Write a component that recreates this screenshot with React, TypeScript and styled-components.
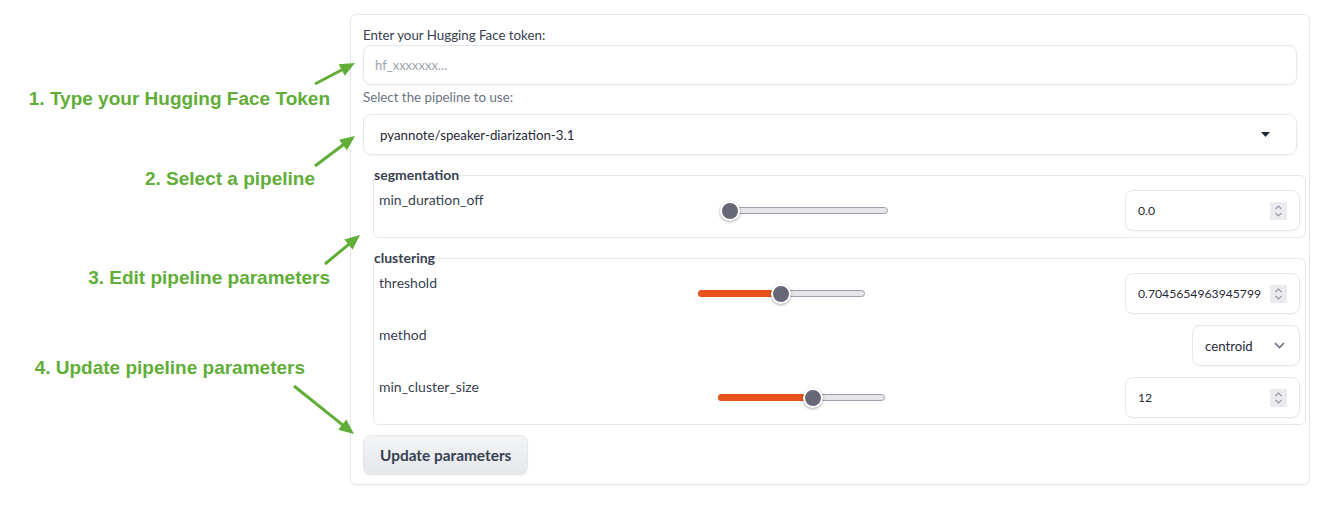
import React from "react";
import styled, { createGlobalStyle } from "styled-components";

const GlobalStyle = createGlobalStyle`
  html, body { margin: 0; padding: 0; background: #ffffff; }
  body { font-family: Lato, "Noto Sans", sans-serif; }
  * { box-sizing: border-box; }
`;

const Page = styled.div`
  position: relative;
  display: flex;
  align-items: flex-start;
  width: 1335px;
  height: 510px;
  overflow: hidden;
`;

const Notes = styled.div`
  width: 350px;
  flex: none;
  display: flex;
  flex-direction: column;
  align-items: flex-end;
  padding-top: 88px;
`;

const Note = styled.div<{ $top: number; $right: number }>`
  margin-top: ${(p) => p.$top}px;
  margin-right: ${(p) => p.$right}px;
  font-family: "Liberation Sans", Arial, sans-serif;
  font-weight: 700;
  font-size: 19px;
  line-height: 22px;
  color: #60ae37;
  white-space: nowrap;
`;

const ArrowLayer = styled.svg`
  position: absolute;
  left: 0;
  top: 0;
  width: 1335px;
  height: 510px;
  pointer-events: none;
  z-index: 2;
`;

const Card = styled.div`
  margin-top: 14px;
  width: 960px;
  flex: none;
  border: 1px solid #e5e7eb;
  border-radius: 6px;
  padding: 10px 12px 9px;
  display: flex;
  flex-direction: column;
  background: #ffffff;
  box-shadow: 0 1px 2px rgba(0, 0, 0, 0.04);
`;

const FieldLabel = styled.label<{ $muted?: boolean; $gap?: number }>`
  display: block;
  font-size: 13.3px;
  line-height: 20px;
  margin-top: ${(p) => p.$gap ?? 0}px;
  color: ${(p) => (p.$muted ? "#6b7280" : "#374151")};
`;

const TextBox = styled.input`
  height: 40px;
  width: 100%;
  border: 1px solid #e5e7eb;
  border-radius: 8px;
  padding: 0 11px;
  font-family: inherit;
  font-size: 13px;
  color: #1f2937;
  outline: none;
  box-shadow: 0 1px 2px rgba(0, 0, 0, 0.04);
  &::placeholder {
    color: #9ca3af;
  }
`;

const PipelineSelect = styled.div`
  margin-top: 7px;
  height: 41px;
  border: 1px solid #e5e7eb;
  border-radius: 8px;
  padding: 0 26px 0 16px;
  display: flex;
  align-items: center;
  justify-content: space-between;
  font-size: 13.3px;
  color: #1f2937;
  box-shadow: 0 1px 2px rgba(0, 0, 0, 0.04);
`;

const Group = styled.fieldset`
  margin: 11px -9px 0 10px;
  padding: 6px 5px 6px;
  border: 1px solid #e5e7eb;
  border-radius: 6px;
  min-width: 0;
  display: flex;
  flex-direction: column;
  gap: 11px;
`;

const Legend = styled.legend`
  padding: 0;
  margin-left: -5px;
  font-weight: 700;
  font-size: 14px;
  line-height: 18px;
  color: #374151;
`;

const Row = styled.div`
  display: flex;
  align-items: center;
  height: 41px;
`;

const ParamLabel = styled.span`
  align-self: flex-start;
  font-size: 14px;
  line-height: 20px;
  color: #374151;
`;

const SliderSlot = styled.div`
  flex: 1;
  display: flex;
  justify-content: center;
  align-items: center;
`;

const Track = styled.div`
  position: relative;
  width: 167px;
  height: 7px;
  border: 1px solid #9e9eaa;
  border-radius: 4px;
  background: #e6e6ea;
`;

const Fill = styled.div`
  position: absolute;
  left: -1px;
  top: -1px;
  bottom: -1px;
  border-radius: 4px;
  background: #e8531c;
`;

const Thumb = styled.div`
  position: absolute;
  top: 50%;
  width: 20px;
  height: 20px;
  margin-left: -10px;
  margin-top: -10px;
  border-radius: 50%;
  background: #676776;
  border: 2px solid #ffffff;
  box-shadow: 0 1px 3px rgba(0, 0, 0, 0.35);
`;

const NumberBox = styled.div`
  width: 175px;
  height: 41px;
  margin-left: auto;
  flex: none;
  border: 1px solid #e5e7eb;
  border-radius: 8px;
  padding: 0 12px;
  display: flex;
  align-items: center;
  justify-content: space-between;
  font-size: 12.2px;
  color: #1f2937;
  box-shadow: 0 1px 2px rgba(0, 0, 0, 0.04);
`;

const Spinner = styled.span`
  width: 17px;
  height: 18px;
  background: #ebebef;
  display: flex;
  align-items: center;
  justify-content: center;
`;

const MethodSelect = styled.div`
  width: 108px;
  height: 41px;
  margin-left: auto;
  flex: none;
  border: 1px solid #e5e7eb;
  border-radius: 8px;
  padding: 0 14px 0 12px;
  display: flex;
  align-items: center;
  justify-content: space-between;
  font-size: 13.2px;
  color: #1f2937;
  box-shadow: 0 1px 2px rgba(0, 0, 0, 0.04);
`;

const Button = styled.button`
  margin-top: 10px;
  align-self: flex-start;
  height: 40px;
  padding: 0 16px;
  font-family: inherit;
  font-weight: 700;
  font-size: 15.4px;
  color: #374151;
  background: linear-gradient(to bottom, #f3f4f6, #e5e7eb);
  border: 1px solid #e5e7eb;
  border-radius: 8px;
  box-shadow: 0 1px 2px rgba(0, 0, 0, 0.06);
`;

type Pt = [number, number];

const Arrow: React.FC<{ from: Pt; to: Pt }> = ({ from, to }) => {
  const [x1, y1] = from;
  const [x2, y2] = to;
  const len = Math.hypot(x2 - x1, y2 - y1);
  const ux = (x2 - x1) / len;
  const uy = (y2 - y1) / len;
  const L = 15;
  const W = 6.5;
  const bx = x2 - ux * L;
  const by = y2 - uy * L;
  const px = -uy;
  const py = ux;
  const pts = `${x2},${y2} ${bx + px * W},${by + py * W} ${bx - px * W},${by - py * W}`;
  return (
    <g>
      <line x1={x1} y1={y1} x2={bx + ux * 2} y2={by + uy * 2} stroke="#60ae37" strokeWidth={3} />
      <polygon points={pts} fill="#60ae37" />
    </g>
  );
};

const Slider: React.FC<{ value: number }> = ({ value }) => {
  const pos = 9 + value * (167 - 18);
  return (
    <Track>
      {value > 0 && <Fill style={{ width: pos }} />}
      <Thumb style={{ left: pos - 1 }} />
    </Track>
  );
};

const SpinIcon = () => (
  <Spinner>
    <svg width="9" height="14" viewBox="0 0 9 14" fill="none" stroke="#9a9aa6" strokeWidth="1.2">
      <path d="M1.5 5 L4.5 2 L7.5 5" />
      <path d="M1.5 9 L4.5 12 L7.5 9" />
    </svg>
  </Spinner>
);

const NumberField: React.FC<{ value: string }> = ({ value }) => (
  <NumberBox>
    <span>{value}</span>
    <SpinIcon />
  </NumberBox>
);

export default function App() {
  return (
    <>
      <GlobalStyle />
      <Page>
        <Notes>
          <Note $top={0} $right={20}>1. Type your Hugging Face Token</Note>
          <Note $top={58} $right={35}>2. Select a pipeline</Note>
          <Note $top={77} $right={20}>3. Edit pipeline parameters</Note>
          <Note $top={68} $right={45}>4. Update pipeline parameters</Note>
        </Notes>
        <Card>
          <FieldLabel>Enter your Hugging Face token:</FieldLabel>
          <TextBox placeholder="hf_xxxxxxx..." readOnly />
          <FieldLabel $muted $gap={2}>Select the pipeline to use:</FieldLabel>
          <PipelineSelect>
            <span>pyannote/speaker-diarization-3.1</span>
            <svg width="9" height="5" viewBox="0 0 9 5">
              <path d="M0 0 L9 0 L4.5 5 Z" fill="#1f2937" />
            </svg>
          </PipelineSelect>
          <Group>
            <Legend>segmentation</Legend>
            <Row>
              <ParamLabel>min_duration_off</ParamLabel>
              <SliderSlot>
                <Slider value={0} />
              </SliderSlot>
              <NumberField value="0.0" />
            </Row>
          </Group>
          <Group>
            <Legend>clustering</Legend>
            <Row>
              <ParamLabel>threshold</ParamLabel>
              <SliderSlot>
                <Slider value={0.503} />
              </SliderSlot>
              <NumberField value="0.7045654963945799" />
            </Row>
            <Row>
              <ParamLabel>method</ParamLabel>
              <MethodSelect>
                <span>centroid</span>
                <svg width="11" height="7" viewBox="0 0 11 7" fill="none" stroke="#6b7280" strokeWidth="1.6">
                  <path d="M1 1 L5.5 5.5 L10 1" />
                </svg>
              </MethodSelect>
            </Row>
            <Row>
              <ParamLabel>min_cluster_size</ParamLabel>
              <SliderSlot>
                <Slider value={0.577} />
              </SliderSlot>
              <NumberField value="12" />
            </Row>
          </Group>
          <Button>Update parameters</Button>
        </Card>
        <ArrowLayer viewBox="0 0 1335 510">
          <Arrow from={[315, 84]} to={[355, 63]} />
          <Arrow from={[315, 166]} to={[355, 136]} />
          <Arrow from={[325, 264]} to={[360, 235]} />
          <Arrow from={[294, 386]} to={[354, 434]} />
        </ArrowLayer>
      </Page>
    </>
  );
}
